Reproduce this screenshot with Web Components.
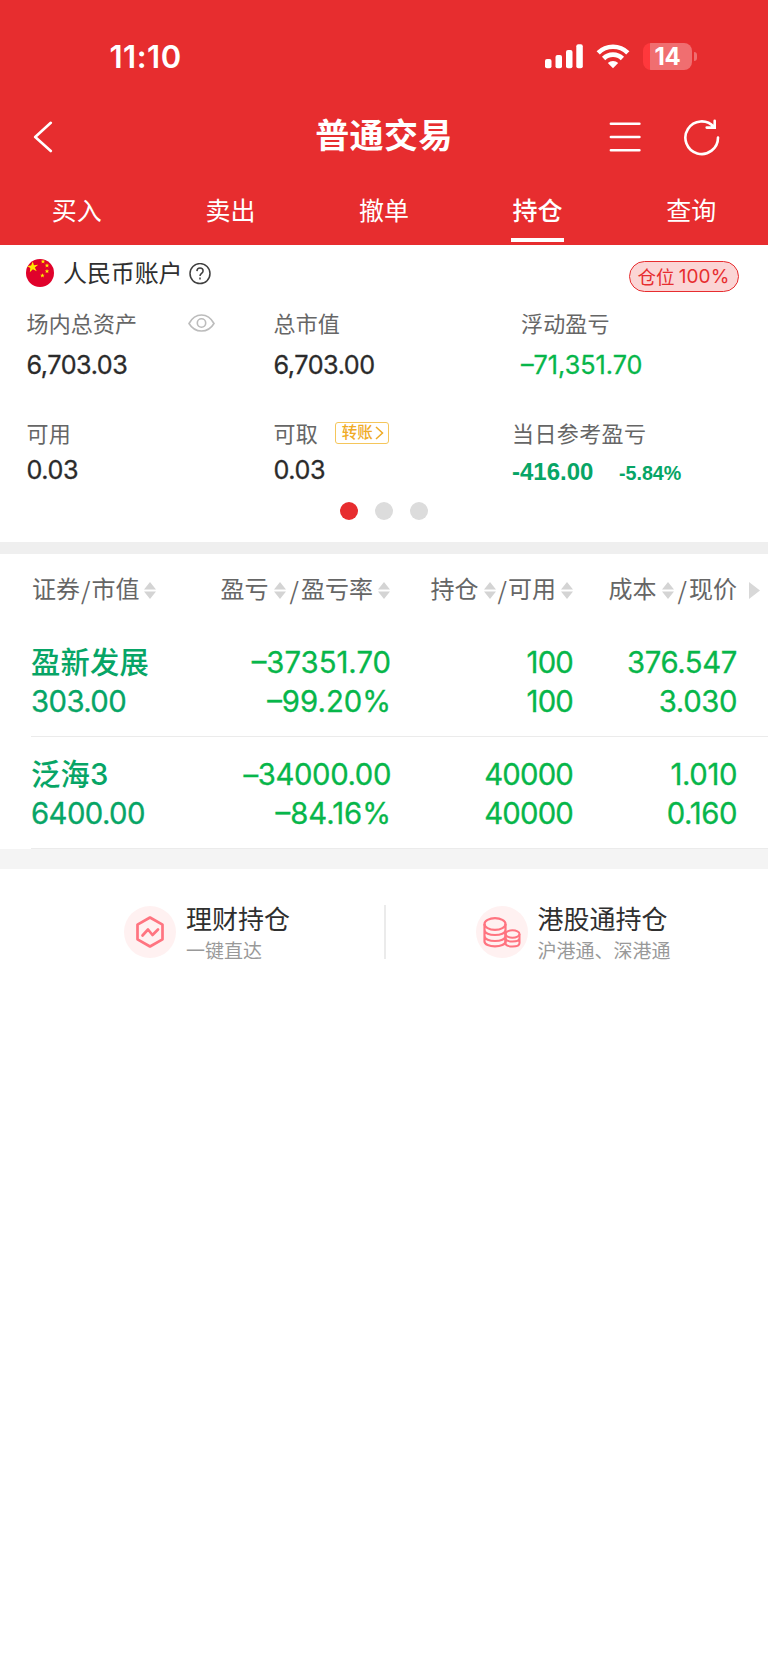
<!DOCTYPE html>
<html lang="zh-CN">
<head>
<meta charset="utf-8">
<meta name="viewport" content="width=device-width">
<title>普通交易</title>
<style>
html,body{margin:0;background:#fff}
body{font-family:Inter,"Noto Sans CJK SC",sans-serif;color:#2f2f2f}
</style>
</head>
<body>
<trade-app></trade-app>
<script>
const define = (name, html) => customElements.define(name, class extends HTMLElement {
  constructor() {
    super();
    const t = document.createElement('template');
    t.innerHTML = html;
    this.attachShadow({mode: 'open'}).appendChild(t.content.cloneNode(true));
  }
});

define('status-bar', `<style>
:host{display:flex;height:114px;box-sizing:border-box;padding:39px 71px 0 109.500px;align-items:flex-start;color:#fff}
.time{font-size:31px;font-weight:600;line-height:36px;letter-spacing:.5px;flex:1}
svg{display:block;flex:none}
.sig{margin:5px 13px 0 0}.wifi{margin:5px 13px 0 0}
.bat{width:49px;height:26.5px;margin-top:4px;border-radius:8px;background:linear-gradient(90deg,#ff383c 7px,#f06e70 7px);font-size:24px;font-weight:700;line-height:27px;text-align:center;letter-spacing:-.2px}
.cap{width:3px;height:9px;margin:13px 0 0 2px;border-radius:0 4px 4px 0;background:#f06e70}
</style>
<div class="time">11:10</div>
<svg class="sig" width="38" height="25" viewBox="0 0 38 25" fill="#fff"><rect y="15" width="6.5" height="9.3" rx="2"/><rect x="10.5" y="11" width="6.5" height="13.3" rx="2"/><rect x="21" y="6" width="6.5" height="18.3" rx="2"/><rect x="31.3" y=".3" width="6.5" height="24" rx="2"/></svg>
<svg class="wifi" width="34" height="25" viewBox="0 0 34 25"><g fill="none" stroke="#fff" stroke-width="4.6"><path d="M2.2 8.8a21 21 0 0 1 29.6 0"/><path d="M7.600 14.500a13.300 13.300 0 0 1 18.800 0"/></g><path d="M17 24.200l-5.200-5.100a7.400 7.400 0 0 1 10.400 0z" fill="#fff"/></svg>
<div class="bat">14</div><div class="cap"></div>`);

define('nav-bar', `<style>
:host{display:grid;grid-template-columns:1fr 160px 1fr;height:60px;color:#fff;padding:0 49px 0 33px}
.title{font-size:34px;font-weight:700;line-height:44px;text-align:center;white-space:nowrap;letter-spacing:.4px;width:176px}
.acts{display:flex;justify-content:flex-end;gap:43px}
svg{display:block;fill:none;stroke:#fff;stroke-width:2.6;stroke-linecap:round}
</style>
<svg width="20" height="32" style="margin-top:7px" viewBox="0 0 20 32"><path d="M17.8 1.8L2.2 16l15.6 14" stroke-linejoin="round"/></svg>
<div class="title"><slot></slot></div>
<div class="acts">
<svg width="32" height="32" style="margin-top:7px" viewBox="0 0 32 32"><path d="M1.900 2.800h28.500M1.900 16h28.500M1.900 29.200h28.500"/></svg>
<svg width="36" height="38" style="margin:4px -1px 0 0" viewBox="0 0 36 38"><path d="M34 19.500A16.300 16.300 0 1 1 30 9M30.700 2.800v6.800h-8"/></svg>
</div>`);

define('tab-item', `<style>
:host{display:flex;flex-direction:column;align-items:center;font-size:25px;font-weight:400;line-height:36px;padding-top:19px;color:#fff}
i{width:53px;height:4px;margin-top:9px}
:host([active]){font-weight:500}
:host([active]) i{background:#fff}
</style><slot></slot><i></i>`);

define('tab-bar', `<style>:host{display:grid;grid-template-columns:repeat(5,1fr);height:71px}</style><slot></slot>`);

define('account-head', `<style>
:host{display:flex;height:59px;padding:0 29.500px 0 26px;align-items:flex-start}
svg{display:block;flex:none}
.name{font-size:24px;line-height:32px;margin:13px 0 0 9px;width:118px;white-space:nowrap;letter-spacing:-.1px}
.sp{flex:1}
.badge{box-sizing:border-box;width:110px;height:31px;margin-top:16px;border:1.6px solid #e72d2f;border-radius:16px;background:#fbd5d5;color:#e72d2f;display:flex;align-items:center;justify-content:center;gap:4px;font-size:18.5px;line-height:28px;font-weight:400}
.badge b{font-weight:400;font-size:19px;letter-spacing:.1px}
</style>
<svg width="28" height="28" style="margin-top:14px" viewBox="0 0 28 28"><defs><clipPath id="c"><circle cx="14" cy="14" r="14"/></clipPath></defs><g clip-path="url(#c)"><path d="M0 0h28v28H0z" fill="#e0022b"/><g fill="#ffea00"><path d="M6.8 2.4l1.1 3.9 4.3-.5-3.4 2.6 1.900 3.900-3.800-2-3.100 3 .5-4.400L1 7l4.100-.5z"/><path id="s" d="M17 .2l.6 1.500 1.600.1-1.200 1 .4 1.600-1.400-.9-1.400.9.4-1.600-1.200-1 1.600-.1z"/><use href="#s" x="4" y="4"/><use href="#s" x="4" y="9.700"/><use href="#s" x="-.6" y="14"/></g></g></svg>
<div class="name">人民币账户</div>
<svg width="22" height="22" style="margin:18px 0 0 8px" viewBox="0 0 22 22" fill="none" stroke="#3f3f3f" stroke-width="1.500"><circle cx="11" cy="10.600" r="10"/><path d="M7.900 8.100C8 6.100 9.300 5 11 5s3.100 1.100 3.100 2.900c0 2.300-3.100 2.600-3.100 5.100M11 14.600v1.800"/></svg>
<div class="sp"></div>
<div class="badge"><span>仓位</span><b>100%</b></div>`);

define('stat-cell', `<style>
:host{display:block;white-space:nowrap}
.l{display:flex;align-items:center;height:32px;font-size:22px;line-height:32px;color:#666;letter-spacing:var(--lls,.15px)}
.v{font-size:25.200px;font-weight:400;line-height:32px;color:#2b2b2b;margin-top:var(--gap,9px);letter-spacing:var(--ls,-.45px);-webkit-text-stroke:var(--st,.3px)}
:host([down]) .v{color:#07b64a}
</style><div class="l"><slot name="label"></slot></div><div class="v"><slot></slot></div>`);

define('asset-panel', `<style>
:host{display:block;height:297px}
.row{display:grid;grid-template-columns:247px 247.500px 1fr;padding-left:26.500px;height:110px}
.row.two{--gap:3.500px;height:88px}
.eye{display:block;margin:-3px 0 0 51px}
.tr{display:flex;align-items:center;box-sizing:border-box;width:54px;height:22px;margin:-2px 0 0 17px;padding-left:6px;border:1.4px solid #f5c65b;border-radius:3px;color:#efab26;font-size:15.500px;font-weight:500;line-height:20px;letter-spacing:0}
.tr svg{margin-left:2px}
.day{margin-left:-9px;--ls:0px;--lls:.4px;--st:0px}
.d{display:flex;align-items:baseline;font-family:"Liberation Sans",sans-serif;font-weight:700;font-size:24px;color:#07a566;gap:25.500px;line-height:36px}
.d small{font-size:19.700px}
.dots{display:flex;justify-content:center;gap:17px;margin-top:-4px}
.dots i{width:18px;height:18px;border-radius:9px;background:#dcdcdc}.dots i:first-child{background:#e72d2f}
</style>
<account-head></account-head>
<div class="row" style="margin-top:4px">
<stat-cell><span slot="label">场内总资产</span><svg slot="label" class="eye" width="27" height="20" viewBox="0 0 27 20" fill="none" stroke="#bcbcbc" stroke-width="1.600"><path d="M1 10.500C4 5 8.500 2 13.500 2S23 5 26 10.500C23 15.500 18.500 18 13.500 18S4 15.500 1 10.500z"/><circle cx="13.500" cy="10" r="4.200"/></svg>6,703.03</stat-cell>
<stat-cell><span slot="label">总市值</span>6,703.00</stat-cell>
<stat-cell down style="--ls:0px"><span slot="label">浮动盈亏</span>–71,351.70</stat-cell>
</div>
<div class="row two">
<stat-cell><span slot="label">可用</span>0.03</stat-cell>
<stat-cell><span slot="label">可取</span><span slot="label" class="tr">转账<svg width="9" height="14" viewBox="0 0 9 14" fill="none" stroke="#efab26" stroke-width="1.500"><path d="M1 1l6.500 6L1 13"/></svg></span>0.03</stat-cell>
<stat-cell class="day"><span slot="label">当日参考盈亏</span><div class="d"><span>-416.00</span><small>-5.84%</small></div></stat-cell>
</div>
<div class="dots"><i></i><i></i><i></i></div>`);

define('sort-mark', `<style>:host{display:block;width:12px;height:17px;flex:none}svg{display:block}</style>
<svg width="12" height="17" viewBox="0 0 12 17" fill="#d4d4d4"><path d="M6 0l6 7.600H0zM6 17l6-7.600H0z"/></svg>`);

define('holdings-head', `<style>
:host{display:grid;grid-template-columns:180px 178px 184px 163px 1fr;padding-left:32px;height:72px;box-sizing:border-box;padding-top:20px;font-size:24px;line-height:32px;color:#666}
div{display:flex;align-items:center;justify-content:flex-end;height:32px;white-space:nowrap}
.first{justify-content:flex-start}
i{font-style:normal;font-family:"Noto Sans CJK SC",sans-serif;padding:0 2px}
.tight i{padding:0 1px 0 0}
sort-mark{margin:0 2px 0 5px}
</style>
<div class="first">证券<i style="padding:0 1px">/</i>市值<sort-mark></sort-mark></div>
<div>盈亏<sort-mark></sort-mark><i>/</i>盈亏率<sort-mark style="margin-right:0"></sort-mark></div>
<div class="tight">持仓<sort-mark></sort-mark><i>/</i>可用<sort-mark style="margin-right:1px"></sort-mark></div>
<div>成本<sort-mark></sort-mark><i>/</i>现价</div>
<div style="justify-content:flex-start;padding-left:12px"><svg width="11" height="17" viewBox="0 0 11 17"><path d="M0 0l11 8.500L0 17z" fill="#d8d8d8"/></svg></div>`);

define('holding-row', `<style>
:host{display:grid;grid-template-columns:180px 180px 182px 164px;margin-left:31px;height:112.700px;box-sizing:border-box;border-bottom:1.400px solid #ebebeb;padding-top:18px;font-size:29.300px;line-height:39px;font-weight:400;-webkit-text-stroke:.3px;color:#07b64a;text-align:right;white-space:nowrap}
.n{color:#07a566;text-align:left}.n div:first-child{font-weight:500;-webkit-text-stroke:0;letter-spacing:.2px}
</style>
<div class="n"><div><slot name="name"></slot></div><div style="letter-spacing:-.6px"><slot name="value"></slot></div></div>
<div><div><slot name="pl"></slot></div><div><slot name="rate"></slot></div></div>
<div style="letter-spacing:-.8px"><div><slot name="qty"></slot></div><div><slot name="avail"></slot></div></div>
<div style="letter-spacing:-.4px"><div><slot name="cost"></slot></div><div><slot name="price"></slot></div></div>`);

define('entry-card', `<style>
:host{display:flex;align-items:flex-start;white-space:nowrap}
.ic{width:52px;height:52px;border-radius:50%;background:#fff1f1;margin:1px 10px 0 0}
.t{font-size:26px;line-height:32px;margin-top:-1px}
.s{font-size:19px;line-height:24px;margin-top:4px;color:#999}
</style><div class="ic"><slot name="icon"></slot></div><div><div class="t"><slot></slot></div><div class="s"><slot name="sub"></slot></div></div>`);

define('trade-app', `<style>
:host{display:block;width:768px;height:1669px;overflow:hidden;background:#fff}
header{background:#e72d2f;height:245px}
.band{height:12px;background:#efefef}
.band2{height:19.500px;background:#f4f4f4}
footer{display:grid;grid-template-columns:384px 2px 1fr;margin-top:36px;height:54px}
footer .d{background:#ebebeb;height:54px}
svg{display:block}
</style>
<header><status-bar></status-bar><nav-bar>普通交易</nav-bar>
<tab-bar><tab-item>买入</tab-item><tab-item>卖出</tab-item><tab-item>撤单</tab-item><tab-item active>持仓</tab-item><tab-item>查询</tab-item></tab-bar></header>
<asset-panel></asset-panel>
<div class="band"></div>
<holdings-head></holdings-head>
<holding-row style="height:110.700px;padding-top:17px"><span slot="name">盈新发展</span><span slot="value">303.00</span><span slot="pl">–37351.70</span><span slot="rate">–99.20%</span><span slot="qty">100</span><span slot="avail">100</span><span slot="cost">376.547</span><span slot="price">3.030</span></holding-row>
<holding-row><span slot="name">泛海3</span><span slot="value">6400.00</span><span slot="pl" style="letter-spacing:-.4px">–34000.00</span><span slot="rate">–84.16%</span><span slot="qty">40000</span><span slot="avail">40000</span><span slot="cost">1.010</span><span slot="price">0.160</span></holding-row>
<div class="band2"></div>
<footer>
<entry-card style="margin-left:124px"><svg slot="icon" width="52" height="52" viewBox="0 0 52 52" fill="none" stroke="#ff7480" stroke-width="2.700" stroke-linejoin="round" stroke-linecap="round"><path d="M26 11.500l12.500 7.200v14.600L26 40.500l-12.500-7.200V18.700z"/><path d="M18.500 29.500l5.500-6 4.500 5.500 5.500-5.500"/></svg>理财持仓<span slot="sub">一键直达</span></entry-card>
<div class="d"></div>
<entry-card style="margin-left:89.500px"><svg slot="icon" width="52" height="52" viewBox="0 0 52 52" fill="none" stroke="#ff7480" stroke-width="2.200"><ellipse cx="19" cy="18" rx="10.500" ry="5.800"/><path d="M8.500 18v17.500c0 3 5 4.800 10.500 4.800s10.500-1.800 10.500-4.800V18M8.500 24c0 3.200 5 5 10.500 5s10.500-1.800 10.500-5M8.500 30c0 3.200 5 5 10.500 5s10.500-1.800 10.500-5"/><g stroke-width="2"><ellipse cx="36.500" cy="28" rx="7" ry="3.700"/><path d="M29.500 28v9c0 2.300 3.500 3.500 7 3.500s7-1.200 7-3.500v-9M29.500 32c0 2.300 3.500 3.500 7 3.500s7-1.200 7-3.500"/></g></svg>港股通持仓<span slot="sub">沪港通、深港通</span></entry-card>
</footer>`);
</script>
</body>
</html>
